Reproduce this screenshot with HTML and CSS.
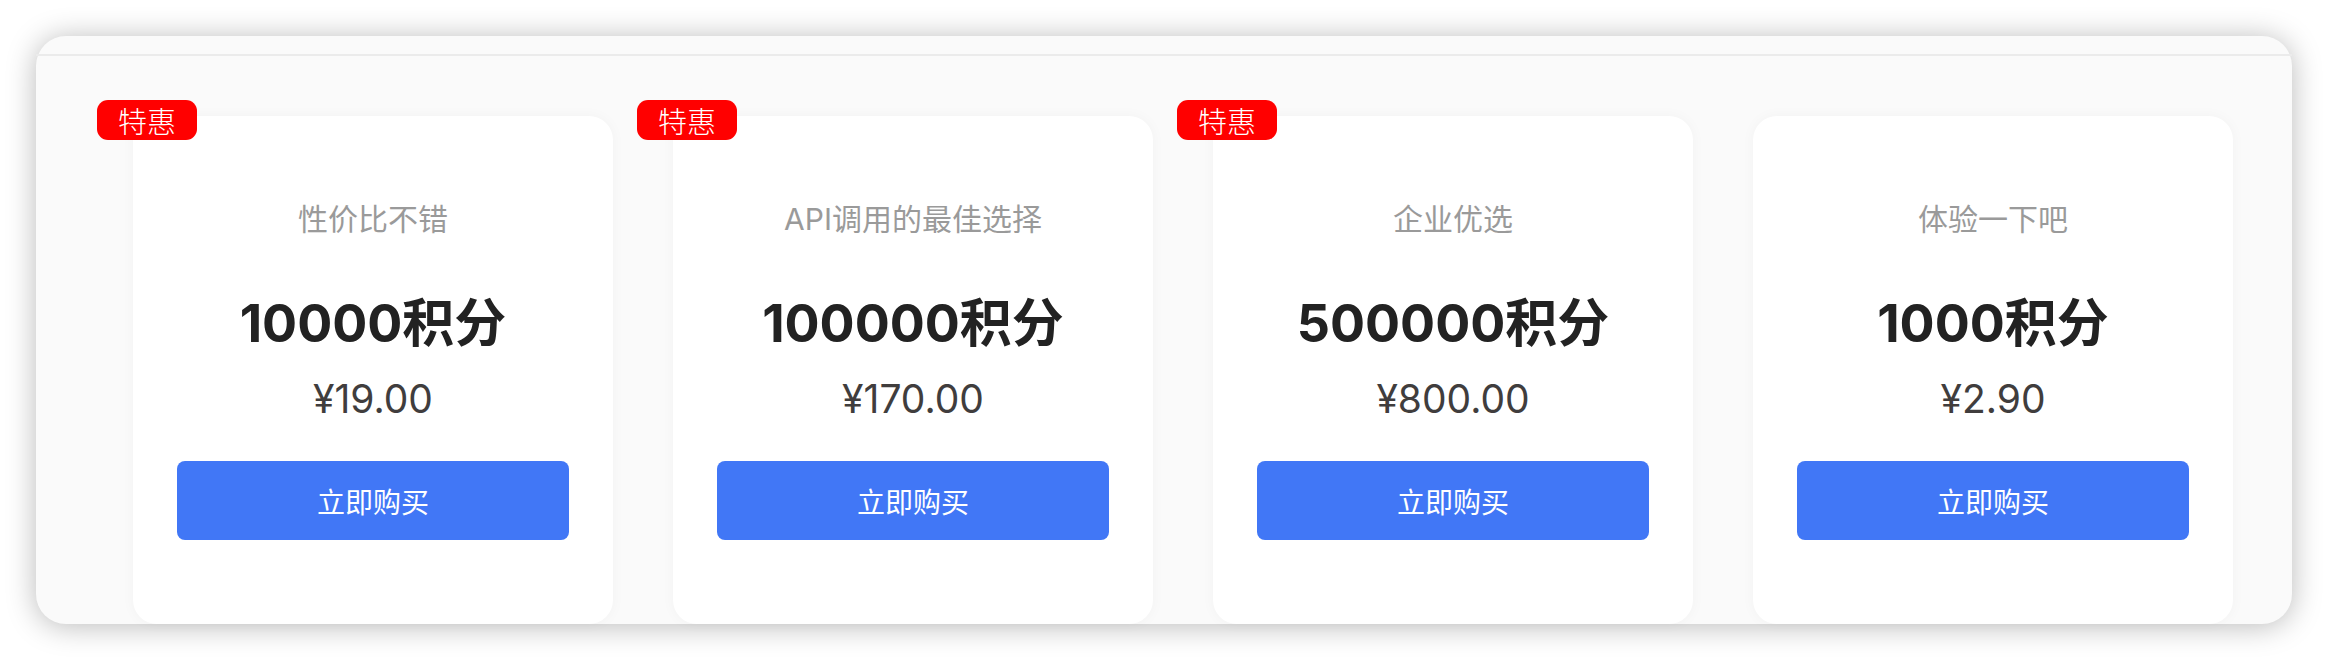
FILE: index.html
```html
<!DOCTYPE html>
<html lang="zh-CN">
<head>
<meta charset="utf-8">
<title>积分购买</title>
<link rel="stylesheet" href="styles.css">
</head>
<body>
<div class="panel">
  <div class="panel-head"></div>
  <div class="plans">
    <div class="plan">
      <span class="badge">特惠</span>
      <div class="card">
        <div class="sub">性价比不错</div>
        <div class="title">10000积分</div>
        <div class="price">¥19.00</div>
        <button class="buy">立即购买</button>
      </div>
    </div>
    <div class="plan">
      <span class="badge">特惠</span>
      <div class="card">
        <div class="sub">API调用的最佳选择</div>
        <div class="title">100000积分</div>
        <div class="price">¥170.00</div>
        <button class="buy">立即购买</button>
      </div>
    </div>
    <div class="plan">
      <span class="badge">特惠</span>
      <div class="card">
        <div class="sub">企业优选</div>
        <div class="title">500000积分</div>
        <div class="price">¥800.00</div>
        <button class="buy">立即购买</button>
      </div>
    </div>
    <div class="plan">
      <div class="card">
        <div class="sub">体验一下吧</div>
        <div class="title">1000积分</div>
        <div class="price">¥2.90</div>
        <button class="buy">立即购买</button>
      </div>
    </div>
  </div>
</div>
</body>
</html>
```

FILE: styles.css
```css
* { box-sizing: border-box; }
html, body { margin: 0; padding: 0; background: #ffffff; }
body {
  font-family: Inter, "Noto Sans CJK SC", sans-serif;
  padding: 36px;
  height: 660px;
}
.panel {
  height: 588px;
  background: #fafafa;
  border-radius: 30px;
  box-shadow: 0 2px 30px rgba(0, 0, 0, 0.28);
  display: flex;
  flex-direction: column;
}
.panel-head {
  height: 20px;
  border-bottom: 2px solid #ebebeb;
  flex: none;
}
.plans {
  flex: 1;
  display: flex;
  gap: 24px;
  padding: 60px 59px 0 61px;
}
.plan {
  flex: 1;
  position: relative;
  padding-left: 36px;
  display: flex;
}
.badge {
  position: absolute;
  left: 0;
  top: -16px;
  z-index: 2;
  width: 100px;
  height: 40px;
  border-radius: 11px;
  background: #ff0000;
  color: #ffffff;
  font-family: "Noto Sans CJK SC", sans-serif;
  font-weight: 300;
  font-size: 29px;
  line-height: 40px;
  text-align: center;
}
.card {
  flex: 1;
  background: #ffffff;
  border-radius: 24px;
  box-shadow: 0 0 14px rgba(0, 0, 0, 0.035);
  display: flex;
  flex-direction: column;
  align-items: center;
  padding: 82px 44px 0 44px;
}
.sub {
  font-size: 30px;
  line-height: 42px;
  color: #9a9a9a;
}
.title {
  margin-top: 54px;
  font-size: 52px;
  line-height: 60px;
  font-weight: 700;
  color: #222222;
}
.price {
  margin-top: 21px;
  font-size: 39px;
  line-height: 48px;
  color: #403d3d;
}
.buy {
  margin-top: 38px;
  width: 100%;
  height: 79px;
  border: none;
  border-radius: 8px;
  background: #4177f6;
  color: #ffffff;
  font-family: "Noto Sans CJK SC", sans-serif;
  font-size: 28px;
  padding: 0;
}
```
